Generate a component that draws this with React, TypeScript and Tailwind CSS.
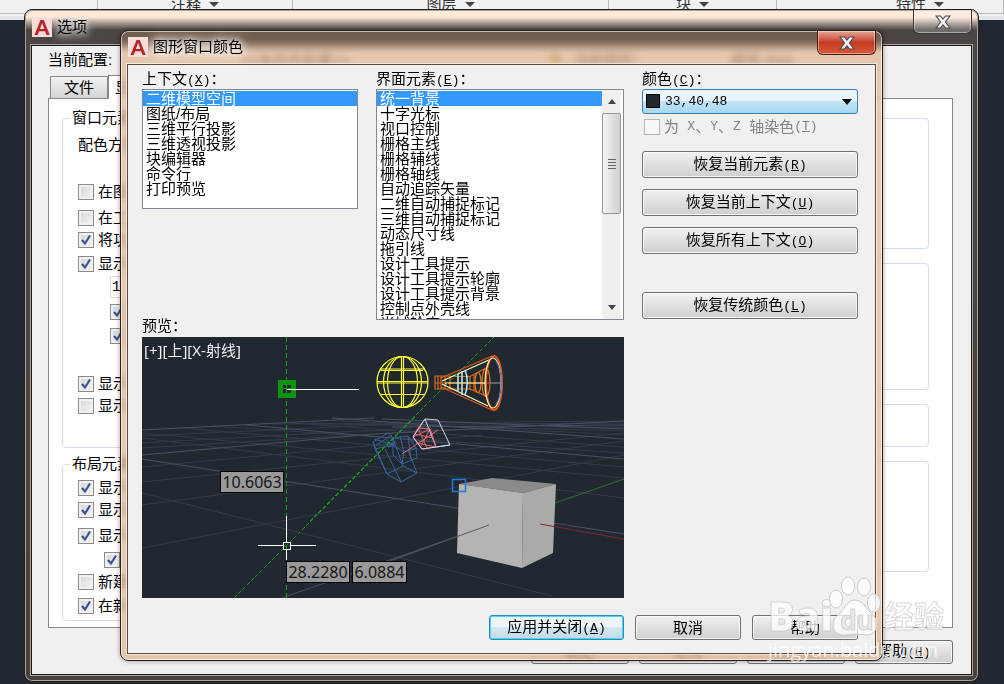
import React, { useState } from 'react';

const contexts = ['二维模型空间', '图纸/布局', '三维平行投影', '三维透视投影', '块编辑器', '命令行', '打印预览'];

const elements = [
  '统一背景', '十字光标', '视口控制', '栅格主线', '栅格辅线', '栅格轴线', '自动追踪矢量', '二维自动捕捉标记',
  '三维自动捕捉标记', '动态尺寸线', '拖引线', '设计工具提示', '设计工具提示轮廓', '设计工具提示背景', '控制点外壳线', '光域轮廓',
];

const windowOptions = [
  { text: '在图', on: false, row: 'h-[26px]' },
  { text: '在工', on: false, row: 'h-[22px]' },
  { text: '将功', on: true, row: 'h-6' },
  { text: '显示', on: true, row: 'h-6' },
];

const layoutOptions = [
  { text: '显示', on: true, row: 'h-[22px]' },
  { text: '显示', on: true, row: 'h-[26px]' },
  { text: '显示', on: true, row: 'h-6' },
  { text: '', on: true, row: 'h-[22px] pl-[26px]' },
  { text: '新建', on: false, row: 'h-6' },
  { text: '在新', on: true, row: 'h-[22px]' },
];

const ribbonPanels = ['', '注释', '图层', '块', '特性'];

// 栅格线：x1, y1, x2, y2
const majorGrid = [
  [0, 93, 232, 81], [0, 118, 232, 97], [0, 122, 482, 197], [105, 88, 482, 122], [190, 81, 482, 102],
  [240, 82, 482, 92], [232, 97, 482, 84], [140, 261, 347, 188], [250, 90, 482, 88],
];
const minorGrid = [
  [0, 145, 482, 96], [0, 168, 482, 104], [0, 211, 482, 118], [0, 156, 410, 259], [0, 130, 340, 98], [0, 106, 270, 91],
  [0, 99, 300, 85], [0, 111, 300, 93], [0, 96, 482, 141], [0, 101, 482, 161], [40, 91, 482, 130], [70, 89, 482, 116],
  [150, 86, 482, 110], [200, 84, 482, 98], [170, 86, 482, 94], [130, 87, 482, 84], [180, 88, 482, 86], [220, 94, 482, 90],
];

const Key: React.FC<{ k: string }> = ({ k }) => (
  <span className="font-['Liberation_Mono'] text-[13px]">
    (<u className="underline-offset-1">{k}</u>)
  </span>
);

const Check: React.FC<{ text: string; on: boolean; row: string }> = ({ text, on, row }) => {
  const [checked, setChecked] = useState<boolean>(on);
  return (
    <label className={`flex items-start gap-1 leading-4 whitespace-nowrap ${row}`}>
      <span className="relative block h-4 w-4 shrink-0">
        <input
          type="checkbox"
          aria-label={text || undefined}
          checked={checked}
          onChange={() => setChecked(!checked)}
          className="block h-4 w-4 appearance-none border border-[#8a8b8b] bg-linear-to-br from-[#cfd3d8] to-[#f8f8f8] shadow-[inset_0_0_0_2px_#f0f0f0]"
        />
        {checked && (
          <svg viewBox="0 0 16 16" className="pointer-events-none absolute inset-0 h-4 w-4" fill="none">
            <path d="M4 8 L7 11.5 L12 3.5" stroke="#3f4f92" strokeWidth="2.2" />
          </svg>
        )}
      </span>
      {text}
    </label>
  );
};

const WinButton: React.FC<{ children: React.ReactNode; className?: string; primary?: boolean }> = ({ children, className = '', primary }) => (
  <button
    type="button"
    className={`rounded-[3px] border text-center whitespace-nowrap ${
      primary
        ? 'border-[#2a8dad] bg-linear-to-b from-[#eef6fb] from-50% via-[#d3e7f1] via-50% to-[#c0dae8] shadow-[inset_0_0_0_1px_#4fd2f5]'
        : 'border-[#707070] bg-linear-to-b from-[#f2f2f2] from-0% via-[#dedede] via-55% to-[#cfcfcf] shadow-[inset_0_0_0_1px_#f8f8f8]'
    } ${className}`}
  >
    {children}
  </button>
);

const AppIcon = () => (
  <span className="flex h-5 w-5 items-center justify-center bg-[#f7dcd8] font-['Lato'] text-[21px] leading-5 font-black text-[#b8232b]">A</span>
);

const CloseX = () => (
  <svg viewBox="0 0 16 14" className="h-[14px] w-4">
    <path
      d="M1 1 H5.5 L8 4.2 L10.5 1 H15 L10.4 7 L15 13 H10.5 L8 9.8 L5.5 13 H1 L5.6 7 Z"
      fill="#f2f2f4" stroke="#4a4650" strokeWidth="1.1"
    />
  </svg>
);

const ListBox: React.FC<{ items: string[]; label: string; className: string }> = ({ items, label, className }) => {
  const [selected, setSelected] = useState<number>(0);
  return (
    <ul role="listbox" aria-label={label} tabIndex={0} className={`overflow-hidden bg-white pt-px ${className}`}>
      {items.map((item, i) => (
        <li
          key={item}
          role="option"
          aria-selected={i === selected}
          onClick={() => setSelected(i)}
          className={`h-[15px] pl-[3px] leading-[15px] whitespace-nowrap ${i === selected ? 'bg-[#3399ff] text-white' : ''}`}
        >
          {item}
        </li>
      ))}
    </ul>
  );
};

const Preview = () => (
  <div className="relative mt-1 h-[261px] overflow-hidden bg-[#212830] font-['Noto_Sans','Noto_Sans_CJK_SC',sans-serif]">
    <svg viewBox="0 0 482 261" preserveAspectRatio="xMinYMin slice" className="h-full w-full" fill="none">
      <g stroke="#353b49">
        {minorGrid.map(([x1, y1, x2, y2], i) => <line key={i} x1={x1} y1={y1} x2={x2} y2={y2} />)}
      </g>
      <g stroke="#4b5063">
        {majorGrid.map(([x1, y1, x2, y2], i) => <line key={i} x1={x1} y1={y1} x2={x2} y2={y2} />)}
      </g>

      {/* 点光源 */}
      <g stroke="#ffff33" strokeWidth="1.2">
        <circle cx="260.5" cy="45" r="25.5" />
        <ellipse cx="260.5" cy="45" rx="15" ry="25.5" />
        <ellipse cx="260.5" cy="45" rx="19" ry="25.5" />
        <path d="M259.5 19.5V70.5M261.5 19.5V70.5M238 32H282M239 33.5H281M235 44.5H286M235 46H286M238.5 57.5H282" />
      </g>

      {/* 聚光灯 */}
      <g strokeWidth="1.2">
        <path d="M293 39H308V52H293ZM296 39V52M299 39V52M303 39V52" stroke="#d8691c" />
        <path d="M308 39.5H328L344 31M308 52H328L344 59M293 46H360M328 39V53M332 38V54" stroke="#d8691c" />
        <ellipse cx="344" cy="45.5" rx="4" ry="14" stroke="#e0771f" />
        <ellipse cx="336" cy="45.5" rx="3" ry="10" stroke="#e0771f" />
        <path d="M299 41L350 19M299 50L350 73" stroke="#e2571c" />
        <path d="M300 44L349 22M300 47L346 69M303 46H344" stroke="#ffffb0" />
        <path d="M320 34V58M323 33C326 40 326 51 323 58M316 37V55" stroke="#b8e6f0" strokeWidth="1.6" />
        <ellipse cx="352" cy="46" rx="8" ry="27" stroke="#e2571c" strokeWidth="2" />
        <ellipse cx="351" cy="46" rx="8" ry="25" stroke="#fff6a8" />
        <path d="M354 24C361 35 361 57 354 67M348 46H358" stroke="#4a6db5" />
      </g>

      {/* 相机 */}
      <g stroke="#35659f">
        <path d="M231 105L246 96L251 101L253 107L233 112ZM234 108L250 98M232 102L248 107M233 112L245 137L259 145L275 136L266 113" />
        <path d="M243 112L259 145M231 105L245 137M245 137L261 129L275 136M261 129L253 107M251 101L266 99L274 111L275 121L260 127L251 118Z" />
        <path d="M258 99L262 115L275 111M252 109L262 115L260 127M266 99L269 123M244 103L252 108L246 110L254 104" />
      </g>
      <g stroke="#e2646c">
        <path d="M276 91L271 100L280 112L294 110L288 92L276 91M273 97L291 101M276 91L285 111M283 82L276 91M260 117L296 93M277 106L293 95M288 92L279 109M271 100L288 92M274 106L294 110" />
      </g>
      <path d="M283 82L296 83L308 108L294 110L283 82L271 100L280 112L308 108" stroke="#c9d8f5" />
      <path d="M276 91L288 92L294 110" stroke="#e2646c" />

      <path d="M317 147L350 141L414 147L381 156Z" fill="#8a8a8a" />
      <path d="M317 147L381 156L380 231L315 216Z" fill="#b4b5b2" />
      <path d="M381 156L414 147L411 216L380 231Z" fill="#aaaba8" />
      <path d="M248 224L347 188" stroke="#555a6b" />
      <path d="M398 187L482 202" stroke="#7d2b31" />
      <path d="M413 166L482 142" stroke="#2c7331" />
      <rect x="310.5" y="142.5" width="13" height="12" stroke="#1d78dc" strokeWidth="1.5" />

      <g shapeRendering="crispEdges">
        <path d="M144.5 0V261" stroke="#129a1a" strokeDasharray="5 3" />
        <path d="M92 261L352 0" stroke="#129a1a" strokeDasharray="4 2" />
        <rect x="138" y="45" width="13" height="13" stroke="#0a960e" strokeWidth="5" />
        <path d="M141 51.5H149M144.5 48V56" stroke="#0a960e" />
        <path d="M145 52.5H217M116 208.5H141M148 208.5H174M144.5 179V205M144.5 212V223" stroke="#fff" />
        <rect x="141.5" y="205.5" width="7" height="7" stroke="#fff" />
      </g>
    </svg>
    <span className="absolute top-1 left-0.5 text-[15px] leading-[18px] text-[#f0f0f0]">[+][上][X-射线]</span>
    <span className="absolute top-[134px] left-[78px] w-16 border border-black bg-[#999] text-center text-base leading-5 text-[#161616]">10.6063</span>
    <span className="absolute top-[224px] left-[144px] w-16 border border-black bg-[#999] text-center text-base leading-5 text-[#161616]">28.2280</span>
    <span className="absolute top-[224px] left-[210px] w-[55px] border border-black bg-[#999] text-center text-base leading-5 text-[#161616]">6.0884</span>
  </div>
);

const OptionsWindow = () => (
  <section className="absolute top-[9px] right-[25px] left-6 rounded-lg border border-[#26201c] bg-linear-to-b from-[#ffe9d9] from-[7px] via-[#4b4643] via-[20px] to-[#4a423c] px-1.5 pb-1.5 shadow-[inset_0_0_0_1px_#a9a19b]">
    <header className="flex h-[35px] items-start justify-between">
      <div className="flex items-center gap-[5px] pt-[7px] pl-px">
        <AppIcon />
        <h2 className="leading-5 text-black [text-shadow:0_0_6px_#fff,0_0_10px_#ddd,0_0_14px_#ccc]">选项</h2>
      </div>
      <button type="button" aria-label="关闭" className="flex h-6 w-[59px] items-center justify-center rounded-b-md border border-t-0 border-[#3c3836] bg-white/20 shadow-[inset_0_0_0_1px_#ffffff66]">
        <CloseX />
      </button>
    </header>

    <div className="border border-[#1e1a18] bg-[#f0f0f0] pt-1.5 pr-[18px] pb-[10px] pl-4 outline outline-[#a9a19b]">
      <div className="grid h-4 grid-cols-[192px_308px_1fr] leading-4 whitespace-nowrap">
        <span>当前配置:</span>
        <span>&lt;&lt;未命名配置&gt;&gt;</span>
        <span className="flex items-center gap-3">
          <svg viewBox="0 0 14 14" className="h-[14px] w-[14px]">
            <path d="M1 1H8L13 8V13H1Z" fill="#e8bf2c" />
            <path d="M4 1H11V10Z" fill="#3b4a63" />
          </svg>
          当前图形:
          <span className="pl-20">建筑.dwg</span>
        </span>
      </div>

      <div className="mt-[7px] flex h-[23px] items-end">
        <button type="button" className="ml-0.5 h-[22px] w-[58px] border border-b-0 border-[#828790] bg-linear-to-b from-[#f2f2f2] to-[#d4d4d4] leading-5">文件</button>
        <button type="button" className="relative -mb-px h-6 w-[58px] border border-b-0 border-[#828790] bg-white pl-1.5 text-left leading-5">显示</button>
      </div>
      <div className="grid grid-cols-2 gap-3 border border-[#828790] bg-white pt-[11px] pr-[23px] pb-1.5 pl-[13px]">
        <div className="flex flex-col gap-2">
          <fieldset className="rounded border border-[#d5dfe5] pb-[33px] pl-[15px]">
            <legend className="-ml-2 h-4 px-0.5 leading-4">窗口元素</legend>
            <p className="mt-[11px] mb-[31px] h-4 leading-4">配色方案</p>
            {windowOptions.map((o) => <Check key={o.text} {...o} />)}
            <div className="flex h-6 items-start pl-8">
              <input type="text" aria-label="字体大小" defaultValue="1" className="-mt-1 h-[22px] w-14 border border-[#dcdcdc] bg-white pl-px font-['Liberation_Mono'] text-[14px]" />
            </div>
            <Check text="" on row="h-6 pl-8" />
            <Check text="" on row="h-12 pl-8" />
            <Check text="显示" on row="h-[22px]" />
            <Check text="显示" on={false} row="h-4" />
          </fieldset>
          <fieldset className="rounded border border-[#d5dfe5] pl-[15px]">
            <legend className="-ml-2 h-4 px-0.5 leading-4">布局元素</legend>
            <div className="pt-2">
              {layoutOptions.map((o, i) => <Check key={i} {...o} />)}
            </div>
          </fieldset>
        </div>
        <div className="flex flex-col gap-[14px] pt-2">
          <div className="h-[131px] rounded border border-[#d5dfe5]" />
          <div className="h-[127px] rounded border border-[#d5dfe5]" />
          <div className="h-[43px] rounded border border-[#d5dfe5]" />
          <div className="h-[111px] rounded border border-[#d5dfe5]" />
        </div>
      </div>

      <footer className="mt-3 flex justify-end gap-2.5">
        <WinButton className="h-6 w-[98px] leading-5">确定</WinButton>
        <WinButton className="h-6 w-[98px] leading-5">取消</WinButton>
        <WinButton className="h-6 w-[98px] leading-5">应用<Key k="A" /></WinButton>
        <WinButton className="h-6 w-[98px] leading-5">帮助<Key k="H" /></WinButton>
      </footer>
    </div>
  </section>
);

const ColorDialog = () => (
  <section
    role="dialog"
    aria-label="图形窗口颜色"
    className="absolute top-[30px] right-[121px] left-[120px] rounded-lg border border-[#2a1f18] bg-linear-to-b from-[#7a6350d0] from-[8px] to-[#dfb896c0] to-[22px] px-1.5 pb-1.5 shadow-[inset_0_0_0_1px_#ffffffa0,0_0_5px_#00000060] backdrop-blur-[3px]"
  >
    <header className="flex h-[33px] items-start justify-between">
      <div className="flex items-center gap-[5px] pt-1.5 pl-px">
        <AppIcon />
        <h1 className="leading-5 text-black [text-shadow:0_0_6px_#fff,0_0_10px_#fff,0_0_14px_#fff]">图形窗口颜色</h1>
      </div>
      <button type="button" aria-label="关闭" className="flex h-6 w-[59px] items-center justify-center rounded-b-md border border-t-0 border-[#4c1a14] bg-linear-to-b from-[#e4a595] from-0% via-[#c4391f] via-50% to-[#d9593a] shadow-[inset_0_0_0_1px_#ffffff70]">
        <CloseX />
      </button>
    </header>

    <div className="border border-[#5a4a40] bg-[#f0f0f0] pt-1.5 pr-[17px] pb-[13px] pl-[14px] outline outline-white/60">
      <div className="flex gap-[18px]">
        <div className="min-w-0 flex-1">
          <div className="grid grid-cols-[216px_1fr] gap-[18px]">
            <div>
              <p className="h-[18px] leading-4">上下文<Key k="X" />：</p>
              <ListBox items={contexts} label="上下文" className="h-[120px] border border-[#828790]" />
            </div>
            <div>
              <p className="h-[18px] leading-4">界面元素<Key k="E" />：</p>
              <div className="flex h-[231px] border border-[#828790] bg-white pr-0.5">
                <ListBox items={elements} label="界面元素" className="flex-1" />
                <div className="flex w-[19px] flex-col items-center bg-[#efefef]">
                  <button type="button" aria-label="向上" className="flex h-[23px] w-full items-center justify-center">
                    <svg viewBox="0 0 8 5" className="h-[5px] w-2"><path d="M4 0L8 5H0Z" fill="#444" /></svg>
                  </button>
                  <div className="flex h-[101px] w-full flex-col items-center justify-center gap-0.5 rounded-xs border border-[#979797] bg-linear-to-r from-[#f5f5f5] to-[#cfcfd2]">
                    <i className="h-px w-2 bg-[#666]" />
                    <i className="h-px w-2 bg-[#666]" />
                    <i className="h-px w-2 bg-[#666]" />
                    <i className="h-px w-2 bg-[#666]" />
                  </div>
                  <button type="button" aria-label="向下" className="mt-auto flex h-[23px] w-full items-center justify-center">
                    <svg viewBox="0 0 8 5" className="h-[5px] w-2"><path d="M0 0H8L4 5Z" fill="#444" /></svg>
                  </button>
                </div>
              </div>
            </div>
          </div>
          <p className="h-[13px] leading-[11px]">预览：</p>
          <Preview />
        </div>

        <div className="flex w-[216px] flex-col">
          <label htmlFor="color" className="h-[18px] leading-4">颜色<Key k="C" />：</label>
          <div className="relative">
            <select
              id="color"
              className="h-[25px] w-full appearance-none rounded-[3px] border border-[#3c7fb1] bg-linear-to-b from-[#e8f5fc] from-50% via-[#c4e5f6] via-50% to-[#a4d6f0] pl-[22px] font-['Liberation_Mono'] text-[13px]"
            >
              <option>33,40,48</option>
            </select>
            <span className="pointer-events-none absolute top-[5px] left-1 h-[14px] w-[14px] border border-black bg-[#212830]" />
            <svg viewBox="0 0 10 6" className="pointer-events-none absolute top-2.5 right-1.5 h-1.5 w-2.5"><path d="M0 0H10L5 6Z" fill="#000" /></svg>
          </div>
          <label className="mt-[5px] flex h-4 items-center gap-1 leading-4 whitespace-nowrap text-[#838383]">
            <input type="checkbox" disabled className="ml-0.5 h-4 w-4 appearance-none border border-[#b6b6b6] bg-[#f8f8f8]" />
            <span className="flex items-center">
              为&nbsp;&nbsp;<span className="font-['Liberation_Mono'] text-[13px]">X</span>、<span className="font-['Liberation_Mono'] text-[13px]">Y</span>、<span className="font-['Liberation_Mono'] text-[13px]">Z</span>&nbsp;&nbsp;轴染色<Key k="T" />
            </span>
          </label>
          <div className="mt-4 flex flex-col gap-[11px]">
            <WinButton className="h-[27px] leading-5">恢复当前元素<Key k="R" /></WinButton>
            <WinButton className="h-[27px] leading-5">恢复当前上下文<Key k="U" /></WinButton>
            <WinButton className="h-[27px] leading-5">恢复所有上下文<Key k="O" /></WinButton>
          </div>
          <WinButton className="mt-[38px] h-[27px] leading-5">恢复传统颜色<Key k="L" /></WinButton>
        </div>
      </div>

      <footer className="mt-[17px] flex justify-end gap-[11px]">
        <WinButton primary className="h-[25px] w-[135px] leading-5">应用并关闭<Key k="A" /></WinButton>
        <WinButton className="h-[25px] w-[106px] leading-5">取消</WinButton>
        <WinButton className="h-[25px] w-[106px] leading-5">帮助</WinButton>
      </footer>
    </div>
  </section>
);

const Watermark = () => (
  <div className="pointer-events-none absolute top-[576px] right-[54px] w-[182px] font-['Open_Sans','Noto_Sans_CJK_SC',sans-serif] text-white/75">
    <div className="relative flex h-[86px] items-start pt-[20px] [-webkit-text-stroke:1px_#c4c4c4aa]">
      <span className="w-[62px] text-[40px] leading-10 font-extrabold">Bai</span>
      <svg viewBox="0 0 52 62" className="absolute top-0 left-[61px] h-[62px] w-[52px]" fill="#ffffffc0" stroke="#c9c9c9" strokeWidth="1">
        <ellipse cx="7" cy="23" rx="6.5" ry="9" />
        <ellipse cx="19" cy="10" rx="6.5" ry="9" />
        <ellipse cx="35" cy="11" rx="6.5" ry="9" />
        <ellipse cx="45" cy="27" rx="6.5" ry="9" />
        <path d="M26 24C34 24 37 33 43 38C52 46 48 60 36 59C29 58 23 58 16 59C4 60 0 47 9 39C15 34 18 24 26 24Z" />
      </svg>
      <span className="relative w-[54px] text-center text-[26px] leading-[48px] font-bold text-[#e8e8e8]">du</span>
      <span className="pt-1 text-[30px] leading-8 font-bold">经验</span>
    </div>
    <p className="-mt-[24px] text-xl leading-6">jingyan.baidu.com</p>
  </div>
);

export default function App() {
  return (
    <main className="relative min-h-screen overflow-hidden bg-[#212830] font-['Liberation_Sans','Noto_Sans_CJK_SC',sans-serif] text-[15px] text-black">
      <nav className="grid h-5 grid-cols-[98px_195px_316px_168px_1fr] border-b-4 border-[#e4e7e9] bg-[#f1f1f1]">
        {ribbonPanels.map((name, i) => (
          <button
            key={i}
            type="button"
            aria-label={name || '面板'}
            className={`flex h-[14px] items-center justify-center gap-2 border-r border-b border-[#b9b9b9] leading-4 text-[#333] ${i === 4 ? 'pl-[60px]' : ''}`}
          >
            {name && (
              <>
                <span className="-mt-1.5">{name}</span>
                <svg viewBox="0 0 10 5" className="-mt-1 h-[5px] w-2.5"><path d="M0 0H10L5 5Z" fill="#444" /></svg>
              </>
            )}
          </button>
        ))}
      </nav>
      <OptionsWindow />
      <ColorDialog />
      <Watermark />
    </main>
  );
}
